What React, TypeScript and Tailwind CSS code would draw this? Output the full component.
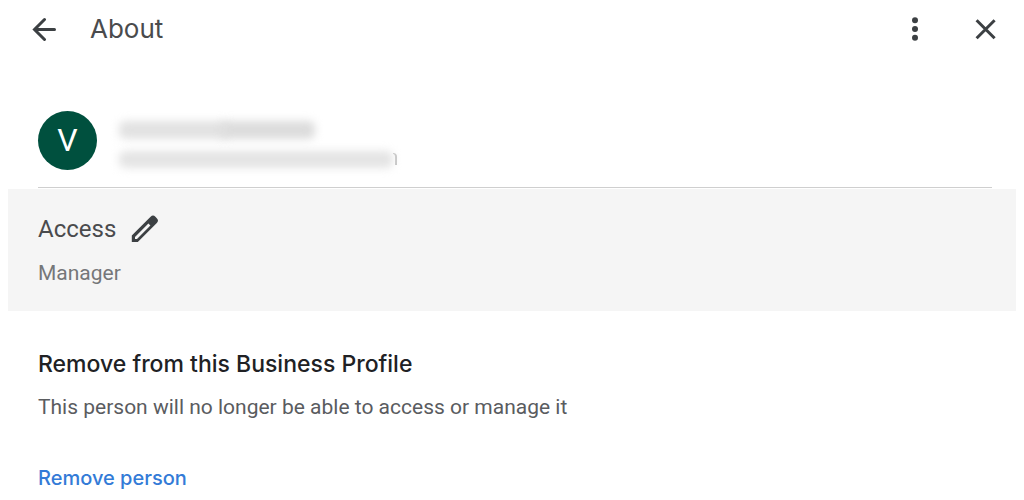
interface Member {
  initial: string
  role: string
}

const member: Member = { initial: 'V', role: 'Manager' }

function BackIcon() {
  return (
    <svg width="24" height="24" viewBox="0 0 24 24" fill="none" stroke="currentColor" strokeWidth="3" strokeLinecap="round" aria-hidden="true">
      <path d="M22.5 12.5H3M12.5 2.5l-10 10 10 10" />
    </svg>
  )
}

function MoreIcon() {
  return (
    <svg width="24" height="24" viewBox="0 0 24 24" fill="currentColor" aria-hidden="true">
      <circle cx="12" cy="3.2" r="3" />
      <circle cx="12" cy="12" r="3" />
      <circle cx="12" cy="20.8" r="3" />
    </svg>
  )
}

function CloseIcon() {
  return (
    <svg width="24" height="24" viewBox="0 0 24 24" fill="none" stroke="currentColor" strokeWidth="3" aria-hidden="true">
      <path d="m2.6 3.2 18 18M20.6 3.2l-18 18" />
    </svg>
  )
}

function PencilIcon() {
  return (
    <svg width="28" height="28" viewBox="0 0 28 28" aria-hidden="true">
      <path
        fill="currentColor"
        fillRule="evenodd"
        d="M.8 20.6 19.6 1.8a3.4 3.4 0 0 1 4.8 0l1.4 1.4a3.4 3.4 0 0 1 0 4.8L6.8 27H.8v-6.4ZM17.4 8.6 4 22v2h2l13.4-13.4-2-2Z"
      />
    </svg>
  )
}

export default function App() {
  return (
    <main className="min-h-screen bg-white font-[Roboto,sans-serif] text-[#3c4043]">
      <header className="flex h-[58px] items-center pr-[26px] pl-8">
        <button type="button" aria-label="Back" className="mr-[34px]">
          <BackIcon />
        </button>
        <h1 className="font-[Inter,sans-serif] text-[26px] leading-8 text-[#4a4b4d]">About</h1>
        <div className="ml-auto flex items-center gap-[47px]">
          <button type="button" aria-label="More options">
            <MoreIcon />
          </button>
          <button type="button" aria-label="Close">
            <CloseIcon />
          </button>
        </div>
      </header>

      <section className="mr-8 ml-[38px] flex h-[130px] items-center gap-[22px] border-b border-[#cfcfcf] pt-[35px]">
        <div className="flex size-[59px] items-center justify-center rounded-full bg-[#00503e] text-[32px] leading-none text-white">
          {member.initial}
        </div>
        {/* name and email are redacted */}
        <div className="flex flex-col gap-3 pt-2" aria-hidden="true">
          <div className="flex">
            <div className="h-[18px] w-[110px] rounded-md bg-[#e2e2e2] blur-[4px]" />
            <div className="-ml-2 h-[18px] w-[94px] rounded-md bg-[#dcdcdc] blur-[4px]" />
          </div>
          <div className="flex items-center">
            <div className="h-[17px] w-[274px] rounded-md bg-[#e4e4e4] blur-[4px]" />
            <div className="h-3 w-1 rounded-tr-sm border-t border-r-2 border-[#c4c4c4]" />
          </div>
        </div>
      </section>

      <section className="mx-2 mt-px h-[122px] bg-[#f5f5f5] px-[30px] pt-[26px]">
        <div className="flex items-center gap-[15px]">
          <h2 className="text-2xl leading-7 text-[#4a4b4d]">Access</h2>
          <button type="button" aria-label="Edit access">
            <PencilIcon />
          </button>
        </div>
        <p className="mt-4 text-[21px] leading-7 text-[#757779]">{member.role}</p>
      </section>

      <section className="px-[38px] pt-[37px]">
        <h2 className="font-[Inter,sans-serif] text-[23px] leading-8 font-medium text-[#202124]">
          Remove from this Business Profile
        </h2>
        <p className="mt-[13px] text-[21px] leading-7 text-[#5a5c5f]">
          This person will no longer be able to access or manage it
        </p>
        <button
          type="button"
          className="mt-[45px] block font-[Inter,sans-serif] text-xl leading-6 font-medium text-[#337bd7]"
        >
          Remove person
        </button>
      </section>
    </main>
  )
}
